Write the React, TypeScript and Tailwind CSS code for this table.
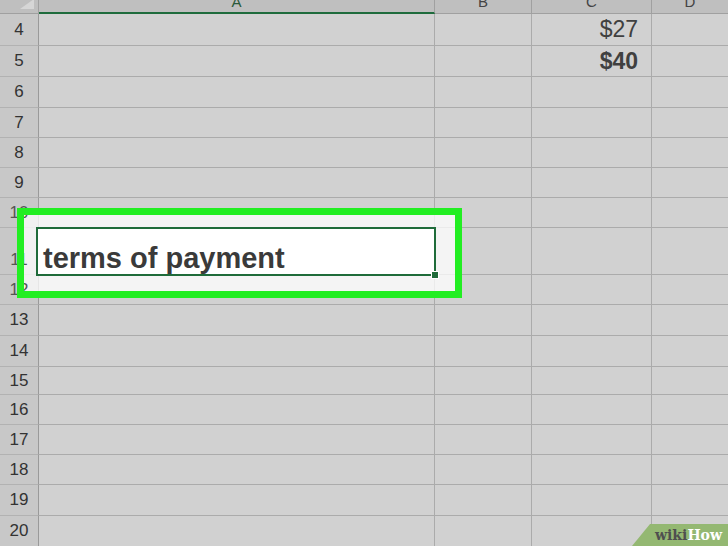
import React from 'react';

const font = { fontFamily: '"Liberation Sans", Arial, sans-serif' };

// row number and height in px (row 11 is the tall one)
const rows: { n: number; h: string }[] = [
  { n: 4, h: 'h-[32px]' },
  { n: 5, h: 'h-[31px]' },
  { n: 6, h: 'h-[31px]' },
  { n: 7, h: 'h-[30px]' },
  { n: 8, h: 'h-[30px]' },
  { n: 9, h: 'h-[30px]' },
  { n: 10, h: 'h-[30px]' },
  { n: 11, h: 'h-[47px]' },
  { n: 12, h: 'h-[30px]' },
  { n: 13, h: 'h-[31px]' },
  { n: 14, h: 'h-[31px]' },
  { n: 15, h: 'h-[28px]' },
  { n: 16, h: 'h-[30px]' },
  { n: 17, h: 'h-[30px]' },
  { n: 18, h: 'h-[30px]' },
  { n: 19, h: 'h-[31px]' },
  { n: 20, h: 'h-[31px]' },
];

function HeaderRow() {
  return (
    <div className="flex h-[14px] shrink-0 bg-[#bfbfbf] text-[15px] leading-none text-[#444]">
      <div className="relative w-[39px] shrink-0 border-r border-b border-[#a0a0a0]">
        <svg className="absolute right-[4px] bottom-[4px]" width="14" height="10" viewBox="0 0 14 10">
          <polygon points="14,0 14,10 0,10" fill="#d6d6d6" />
        </svg>
      </div>
      <div className="flex w-[396px] shrink-0 justify-center overflow-hidden border-r border-[#a0a0a0] border-b-2 border-b-[#1e6b3c] text-[#2a5a3a]">
        <span className="-mt-[6px]">A</span>
      </div>
      <div className="flex w-[97px] shrink-0 justify-center overflow-hidden border-r border-b border-[#a0a0a0]">
        <span className="-mt-[6px]">B</span>
      </div>
      <div className="flex w-[120px] shrink-0 justify-center overflow-hidden border-r border-b border-[#a0a0a0]">
        <span className="-mt-[6px]">C</span>
      </div>
      <div className="flex flex-1 justify-center overflow-hidden border-b border-[#a0a0a0]">
        <span className="-mt-[6px]">D</span>
      </div>
    </div>
  );
}

function Row({ n, h }: { n: number; h: string }) {
  const tall = n === 11;
  const framed = n >= 10 && n <= 12;
  return (
    <div className={`flex shrink-0 ${h}`}>
      <div
        className={`flex w-[39px] shrink-0 justify-center border-r border-r-[#9a9a9a] border-b border-b-[#b2b2b2] bg-[#c8c8c8] text-[17px] ${
          tall ? 'items-end pb-[2px]' : 'items-center'
        }`}
      >
        <span className={framed ? 'relative z-[15] text-[#555]' : 'text-[#333]'}>{n}</span>
      </div>
      <div className="relative w-[396px] shrink-0 border-r border-b border-[#ababab]">
        {tall && (
          <div className="absolute -top-[1px] -left-[3px] z-20 flex h-[49px] w-[400px] items-end border-2 border-[#1f6b3a] bg-white pb-[1px] pl-[5px]">
            <span className="text-[29px] font-bold leading-none text-[#3a3a3a]">terms of payment</span>
            <div className="absolute -right-[5px] -bottom-[5px] h-[8px] w-[8px] border border-white bg-[#1f6b3a]" />
          </div>
        )}
      </div>
      <div className="w-[97px] shrink-0 border-r border-b border-[#ababab]" />
      <div className="flex w-[120px] shrink-0 items-center justify-end border-r border-b border-[#ababab] pr-[13px] text-[23px] text-[#404040]">
        {n === 4 && <span>$27</span>}
        {n === 5 && <span className="font-bold">$40</span>}
      </div>
      <div className="flex-1 border-b border-[#ababab]" />
    </div>
  );
}

export default function App() {
  return (
    <div className="relative flex h-[546px] w-[728px] flex-col overflow-hidden bg-[#d1d1d1]" style={font}>
      <HeaderRow />
      {rows.map((r) => (
        <Row key={r.n} n={r.n} h={r.h} />
      ))}

      {/* wikiHow annotation: white wash under, green frame on top */}
      <div className="absolute top-[208px] left-[17px] z-10 h-[90px] w-[445px] bg-white/75" />
      <div className="absolute top-[208px] left-[17px] z-30 h-[90px] w-[445px] border-[7px] border-[#22ee22]" />

      {/* watermark */}
      <div
        className="absolute right-0 bottom-0 flex h-[22px] w-[96px] items-center justify-end bg-[#94b872] pr-[6px] text-[14px] font-bold [clip-path:polygon(18px_0,100%_0,100%_100%,0_100%)]"
        style={{ fontFamily: '"DejaVu Serif", serif' }}
      >
        <span className="text-[#4f4f4f]">wiki</span>
        <span className="text-white">How</span>
      </div>
    </div>
  );
}
